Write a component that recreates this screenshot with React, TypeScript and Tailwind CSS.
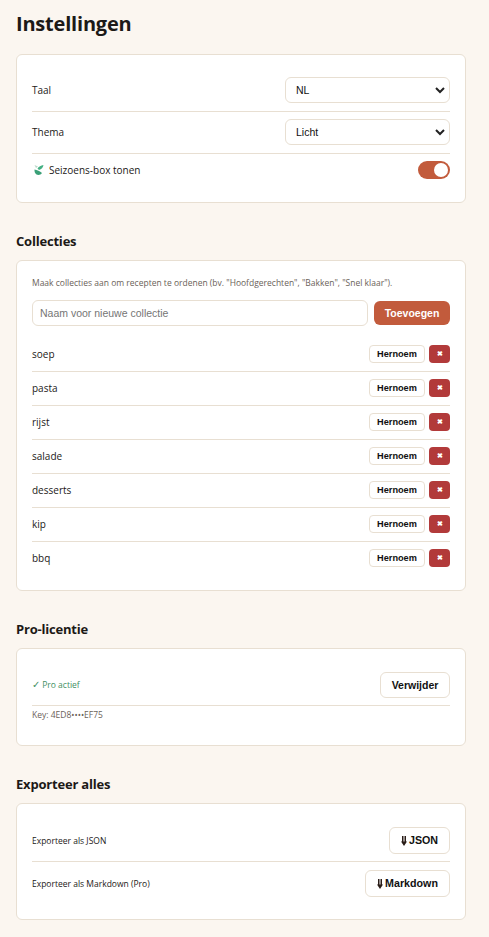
import React from "react";

const sans = "font-['Open_Sans','Noto_Sans',sans-serif]";
const arial = "font-['Liberation_Sans',Arial,sans-serif]";

function Card({ className, children }: { className: string; children: React.ReactNode }) {
  return <div className={`mx-4 w-[450px] rounded-md border border-[#e8dfd2] bg-white px-[15px] ${className}`}>{children}</div>;
}

function H2({ className, children }: { className: string; children: React.ReactNode }) {
  return <h2 className={`mx-4 text-[13px] leading-[20px] font-bold tracking-[-0.2px] text-[#1c1917] ${className}`}>{children}</h2>;
}

function Select({ value }: { value: string }) {
  return (
    <div className={`relative h-[26px] w-[165px] rounded-md border border-[#e8dfd2] bg-white pl-[10px] text-[10.5px] leading-[24px] text-[#111] ${arial}`}>
      {value}
      <svg className="absolute right-[3px] top-[8px]" width="12" height="9" viewBox="0 0 12 9" fill="none" stroke="#222" strokeWidth="2">
        <path d="M2 2l4 4 4-4" />
      </svg>
    </div>
  );
}

function Arrow() {
  return (
    <svg width="6" height="10" viewBox="0 0 6 10" className="mr-[2px]" fill="#2a1d18">
      <path d="M1 0h1.5v6H1zM3.5 0H5v6H3.5zM0 5.5h6L3 10z" />
    </svg>
  );
}

const collections = ["soep", "pasta", "rijst", "salade", "desserts", "kip", "bbq"];

export default function App() {
  return (
    <div className={`h-[937px] w-[489px] overflow-hidden bg-[#fbf6f0] text-[#1c1917] ${sans}`}>
      <h1 className="mx-4 pt-[9px] text-[20px] leading-[30px] font-bold tracking-[-0.2px]">Instellingen</h1>

      <Card className="mt-[15px] h-[149px] pt-[22px]">
        <div className="flex h-[35px] items-start justify-between border-b border-[#e8dfd2]">
          <span className="text-[10px] leading-[26px]">Taal</span>
          <Select value="NL" />
        </div>
        <div className="flex h-[42px] items-start justify-between border-b border-[#e8dfd2] pt-[7px]">
          <span className="text-[10px] leading-[26px]">Thema</span>
          <Select value="Licht" />
        </div>
        <div className="flex h-[34px] items-center justify-between pb-[2px]">
          <span className="flex items-center gap-[4px] text-[10px]">
            <svg width="12" height="12" viewBox="0 0 12 12" className="ml-[1px]">
              <path d="M1.5 1 L5 2.5 L3 4 Z" fill="#b9d8c8" />
              <path d="M4.5 4.5 C5.5 2.5 8 1.5 10.5 1 C10 3.5 8.5 5.5 6 6 Z" fill="#43b083" />
              <path d="M1.5 5.5 C4 6 7 7 9 9 C8 11 5 11.5 3.5 10.5 C2 9.5 1.3 7.5 1.5 5.5Z" fill="#3aa077" />
            </svg>
            Seizoens-box tonen
          </span>
          <span className="flex h-[18px] w-[32px] items-center justify-end rounded-full bg-[#c25b3c] pr-[2px]">
            <span className="h-[14px] w-[14px] rounded-full bg-white" />
          </span>
        </div>
      </Card>

      <H2 className="mt-[28px]">Collecties</H2>
      <Card className="mt-[9px] h-[331px] pt-[15px]">
        <p className="text-[8.5px] leading-[14px] text-[#6b6259]">Maak collecties aan om recepten te ordenen (bv. "Hoofdgerechten", "Bakken", "Snel klaar").</p>
        <div className="mt-[10px] flex items-center gap-[6px]">
          <div className={`h-[26px] w-[336px] rounded-md border border-[#e8dfd2] bg-white pl-[7px] text-[10.5px] leading-[24px] text-[#757575] ${arial}`}>Naam voor nieuwe collectie</div>
          <div className={`h-[24px] w-[76px] rounded-md bg-[#c25b3c] text-center text-[10.5px] leading-[24px] font-bold text-white ${arial}`}>Toevoegen</div>
        </div>
        <div className="mt-[12px]">
          {collections.map((name, i) => (
            <div key={name} className={`flex h-[34px] items-center justify-between border-b pb-[1px] ${i < collections.length - 1 ? "border-[#e8dfd2]" : "border-transparent"}`}>
              <span className="text-[10px]">{name}</span>
              <span className="flex gap-[4px]">
                <span className={`h-[18px] w-[56px] rounded-[4px] border border-[#e8dfd2] bg-white text-center text-[9.2px] leading-[16px] font-bold text-[#111] ${arial}`}>Hernoem</span>
                <span className={`h-[18px] w-[21px] rounded-[4px] bg-[#b23a3a] text-center text-[7px] leading-[18px] font-bold text-white ${arial}`}>✖</span>
              </span>
            </div>
          ))}
        </div>
      </Card>

      <H2 className="mt-[28px]">Pro-licentie</H2>
      <Card className="mt-[9px] h-[98px] pt-[23px]">
        <div className="flex h-[34px] items-start justify-between border-b border-[#e8dfd2]">
          <span className="text-[8.5px] leading-[26px] text-[#3f8f63]"><span className="text-[10px] leading-none">✓</span> Pro actief</span>
          <span className={`h-[26px] w-[70px] rounded-md border border-[#e8dfd2] bg-white text-center text-[10.5px] leading-[24px] font-bold text-[#111] ${arial}`}>Verwijder</span>
        </div>
        <p className="mt-[3px] text-[8.5px] leading-[12px] text-[#6b6259]">Key: 4ED8••••EF75</p>
      </Card>

      <H2 className="mt-[28px]">Exporteer alles</H2>
      <Card className="mt-[9px] h-[117px] pt-[23px]">
        <div className="flex h-[35px] items-start justify-between border-b border-[#e8dfd2]">
          <span className="text-[8.5px] leading-[27px]">Exporteer als JSON</span>
          <span className={`flex h-[27px] w-[61px] items-center justify-center rounded-md border border-[#e8dfd2] bg-white text-[10.7px] font-bold text-[#111] ${arial}`}><Arrow />JSON</span>
        </div>
        <div className="flex items-start justify-between pt-[8px]">
          <span className="text-[8.5px] leading-[27px]">Exporteer als Markdown (Pro)</span>
          <span className={`flex h-[27px] w-[85px] items-center justify-center rounded-md border border-[#e8dfd2] bg-white text-[10.7px] font-bold text-[#111] ${arial}`}><Arrow />Markdown</span>
        </div>
      </Card>
    </div>
  );
}
